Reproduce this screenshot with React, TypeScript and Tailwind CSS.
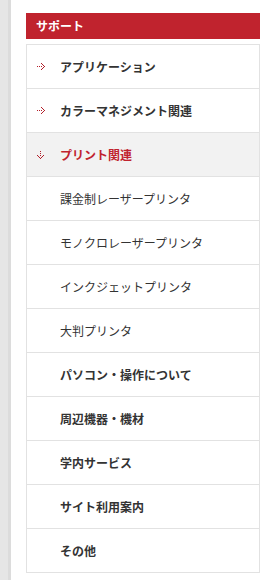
const items: { label: string; kind: "top" | "open" | "sub" | "plain" }[] = [
  { label: "アプリケーション", kind: "top" },
  { label: "カラーマネジメント関連", kind: "top" },
  { label: "プリント関連", kind: "open" },
  { label: "課金制レーザープリンタ", kind: "sub" },
  { label: "モノクロレーザープリンタ", kind: "sub" },
  { label: "インクジェットプリンタ", kind: "sub" },
  { label: "大判プリンタ", kind: "sub" },
  { label: "パソコン・操作について", kind: "plain" },
  { label: "周辺機器・機材", kind: "plain" },
  { label: "学内サービス", kind: "plain" },
  { label: "サイト利用案内", kind: "plain" },
  { label: "その他", kind: "plain" },
];

function ArrowRight() {
  return (
    <svg width="8" height="7" viewBox="0 0 8 7" className="shrink-0" fill="#b3202b">
      <rect x="0" y="3" width="1" height="1" />
      <rect x="2" y="3" width="1" height="1" />
      <rect x="4" y="0" width="1" height="1" />
      <rect x="5" y="1" width="1" height="1" />
      <rect x="6" y="2" width="1" height="1" />
      <rect x="7" y="3" width="1" height="1" />
      <rect x="6" y="4" width="1" height="1" />
      <rect x="5" y="5" width="1" height="1" />
      <rect x="4" y="6" width="1" height="1" />
      <rect x="4" y="3" width="1" height="1" />
    </svg>
  );
}

function ArrowDown() {
  return (
    <svg width="7" height="8" viewBox="0 0 7 8" className="shrink-0" fill="#b3202b">
      <rect x="3" y="0" width="1" height="1" />
      <rect x="3" y="2" width="1" height="1" />
      <rect x="3" y="4" width="1" height="1" />
      <rect x="0" y="4" width="1" height="1" />
      <rect x="1" y="5" width="1" height="1" />
      <rect x="2" y="6" width="1" height="1" />
      <rect x="3" y="7" width="1" height="1" />
      <rect x="4" y="6" width="1" height="1" />
      <rect x="5" y="5" width="1" height="1" />
      <rect x="6" y="4" width="1" height="1" />
    </svg>
  );
}

export default function App() {
  return (
    <div
      className="flex h-[580px] w-[275px] overflow-hidden bg-white"
      style={{ fontFamily: '"Noto Sans CJK JP", "Noto Sans", sans-serif' }}
    >
      <div className="w-[8px] shrink-0 bg-[#e6e6e6]" />
      <div className="w-[3px] shrink-0 bg-[#dcdcdc]" />
      <div className="ml-[15px] w-[234px] pt-[13px]">
        <div className="flex h-[26px] items-center bg-[#c0232e] pl-[10px] text-[12px] font-bold text-white">
          サポート
        </div>
        <ul className="mt-[5px] border-x border-b border-[#e2e2e2]">
          {items.map((item) => (
            <li
              key={item.label}
              className={`flex h-[44px] items-center border-t border-[#e2e2e2] text-[12px] ${
                item.kind === "open" ? "bg-[#f2f2f2]" : ""
              }`}
            >
              <span className="flex w-[33px] shrink-0 justify-start pl-[10px]">
                {item.kind === "top" && <ArrowRight />}
                {item.kind === "open" && <ArrowDown />}
              </span>
              <span
                className={
                  item.kind === "open"
                    ? "font-bold text-[#c0232e]"
                    : item.kind === "sub"
                      ? "text-[#333333]"
                      : "font-bold text-[#333333]"
                }
              >
                {item.label}
              </span>
            </li>
          ))}
        </ul>
      </div>
    </div>
  );
}
